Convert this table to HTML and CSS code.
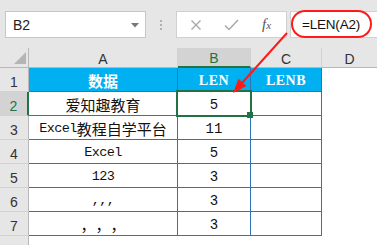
FILE: index.html
```html
<!DOCTYPE html>
<html>
<head>
<meta charset="utf-8">
<link rel="stylesheet" href="styles.css">
</head>
<body>
<div class="app">
  <div class="toolbar">
    <div class="namebox">
      <span class="nb-text">B2</span>
      <svg class="dd" width="8" height="5" viewBox="0 0 8 5"><polygon points="0,0 8,0 4,4.5" fill="#777"/></svg>
    </div>
    <div class="grip"><i></i><i></i><i></i></div>
    <div class="fxbox">
      <svg class="ico" width="12" height="12" viewBox="0 0 12 12"><path d="M1.5 1.5 L10.5 10.5 M10.5 1.5 L1.5 10.5" stroke="#a9a9a9" stroke-width="1.4" fill="none"/></svg>
      <svg class="ico" width="15" height="12" viewBox="0 0 15 12"><path d="M1 6.5 L5 10.5 L14 1" stroke="#a9a9a9" stroke-width="1.5" fill="none"/></svg>
      <span class="fx">f<span class="fx-x">x</span></span>
    </div>
    <div class="formula"><span class="ring">=LEN(A2)</span></div>
  </div>
  <div class="sheet">
    <div class="corner"><svg width="12" height="12" viewBox="0 0 12 12"><polygon points="12,0 12,12 0,12" fill="#b5b5b5"/></svg></div>
    <div class="ch">A</div><div class="ch sel">B</div><div class="ch">C</div><div class="ch last">D</div>

    <div class="rh">1</div><div class="c hd">数据</div><div class="c hd hl">LEN</div><div class="c hd hl">LENB</div><div class="e"></div>
    <div class="rh sel">2</div><div class="c">爱知趣教育</div><div class="c n active">5</div><div class="c"></div><div class="e"></div>
    <div class="rh">3</div><div class="c"><span class="l">Excel</span>教程自学平台</div><div class="c n">11</div><div class="c"></div><div class="e"></div>
    <div class="rh">4</div><div class="c l">Excel</div><div class="c n">5</div><div class="c"></div><div class="e"></div>
    <div class="rh">5</div><div class="c l">123</div><div class="c n">3</div><div class="c"></div><div class="e"></div>
    <div class="rh">6</div><div class="c l">,,,</div><div class="c n">3</div><div class="c"></div><div class="e"></div>
    <div class="rh">7</div><div class="c"><span class="fw">，</span><span class="fw">，</span><span class="fw">，</span></div><div class="c n">3</div><div class="c"></div><div class="e"></div>
    <div class="rh"></div><div class="e"></div><div class="e"></div><div class="e"></div><div class="e"></div>
  </div>
  <svg class="arrow" width="377" height="245" viewBox="0 0 377 245">
    <line x1="287" y1="33" x2="242" y2="83" stroke="#ff1a1a" stroke-width="2"/>
    <polygon points="233,93 246.5,86 238.5,78.8" fill="#ff1a1a"/>
  </svg>
</div>
</body>
</html>
```

FILE: styles.css
```css
* { box-sizing: border-box; margin: 0; padding: 0; }
html, body { width: 377px; height: 245px; overflow: hidden; background: #fff; }
body { font-family: "Liberation Sans", Arial, sans-serif; }

.app { position: relative; width: 377px; height: 245px; overflow: hidden; }

.toolbar {
  height: 48px;
  background: #e6e6e6;
  display: flex;
  align-items: flex-start;
  padding: 11px 0 0 5px;
}
.namebox {
  width: 141px; height: 27px;
  background: #fff;
  border: 1px solid #c6c6c6;
  display: flex; align-items: center; justify-content: space-between;
  padding: 0 6px 0 7px;
}
.nb-text { font-size: 14px; color: #222; }
.dd { margin-top: 1px; }

.grip {
  width: 30px; height: 27px;
  display: flex; flex-direction: column; align-items: center; justify-content: center; gap: 2px;
}
.grip i { display: block; width: 2px; height: 2px; background: #b0b0b0; }

.fxbox {
  width: 111px; height: 27px;
  background: #fff;
  border: 1px solid #d0d0d0;
  display: flex; align-items: center;
  padding-left: 13px;
}
.fxbox .ico:nth-child(1) { margin-right: 22px; }
.fxbox .ico:nth-child(2) { margin-right: 23px; }
.fx { font-family: "Liberation Serif", serif; font-style: italic; font-size: 15px; color: #555; line-height: 1; }
.fx-x { font-size: 11px; }

.formula {
  flex: 1; height: 27px; margin-left: 3px;
  background: #fff;
  border: 1px solid #d0d0d0; border-right: none;
}
.ring {
  display: inline-flex; align-items: center;
  margin-top: -2px;
  width: 81px; height: 28px;
  border: 2px solid #ff1a1a;
  border-radius: 14px;
  padding-left: 9px;
  font-size: 13.5px; letter-spacing: -0.2px;
  color: #111;
}

.sheet {
  display: grid;
  grid-template-columns: 29px 149px 73px 71px 1fr;
  grid-template-rows: 20px repeat(8, 24px);
}
.corner {
  background: #e6e6e6;
  border-right: 1px solid #b8b8b8; border-bottom: 1px solid #b8b8b8;
  display: flex; align-items: flex-end; justify-content: flex-end;
  padding: 0 2px 3px 0;
}
.ch {
  background: #e6e6e6;
  border-right: 1px solid #d2d2d2; border-bottom: 1px solid #b8b8b8;
  display: flex; align-items: center; justify-content: center;
  font-size: 14px; color: #333; padding-top: 2px;
}
.ch.last { border-right: none; }
.ch.sel { background: #d3d3d3; color: #217346; border-bottom: 2px solid #217346; }

.rh {
  background: #e6e6e6;
  border-right: 1px solid #b8b8b8; border-bottom: 1px solid #d2d2d2;
  display: flex; align-items: flex-end; justify-content: center;
  font-size: 14px; color: #333; padding-bottom: 1px;
}
.rh.sel { background: #d3d3d3; color: #217346; border-right: 2px solid #217346; }

.c {
  border-right: 1px solid #2e75b6; border-bottom: 1px solid #2e75b6;
  display: flex; align-items: center; justify-content: center;
  font-family: "Noto Sans CJK SC", sans-serif; font-size: 15px; color: #111;
  white-space: nowrap; padding-top: 1px;
}
.l { font-family: "Liberation Mono", monospace; font-size: 13.5px; letter-spacing: -0.6px; }
.c.n { font-family: "Liberation Mono", monospace; font-size: 14px; padding-top: 2px; }
.fw { display: inline-block; width: 15px; text-align: left; }
.c.hd { background: #00b0f0; color: #fff; font-weight: bold; }
.c.hd.hl { font-family: "Liberation Serif", serif; font-size: 14px; letter-spacing: 0.5px; padding-top: 2px; }

.active { position: relative; }
.active::before {
  content: ""; position: absolute;
  left: -2px; top: -2px; right: -2px; bottom: -2px;
  border: 2px solid #217346;
}
.active::after {
  content: ""; position: absolute;
  right: -3px; bottom: -3px; width: 6px; height: 6px;
  background: #217346;
}

.arrow { position: absolute; left: 0; top: 0; pointer-events: none; }
```
